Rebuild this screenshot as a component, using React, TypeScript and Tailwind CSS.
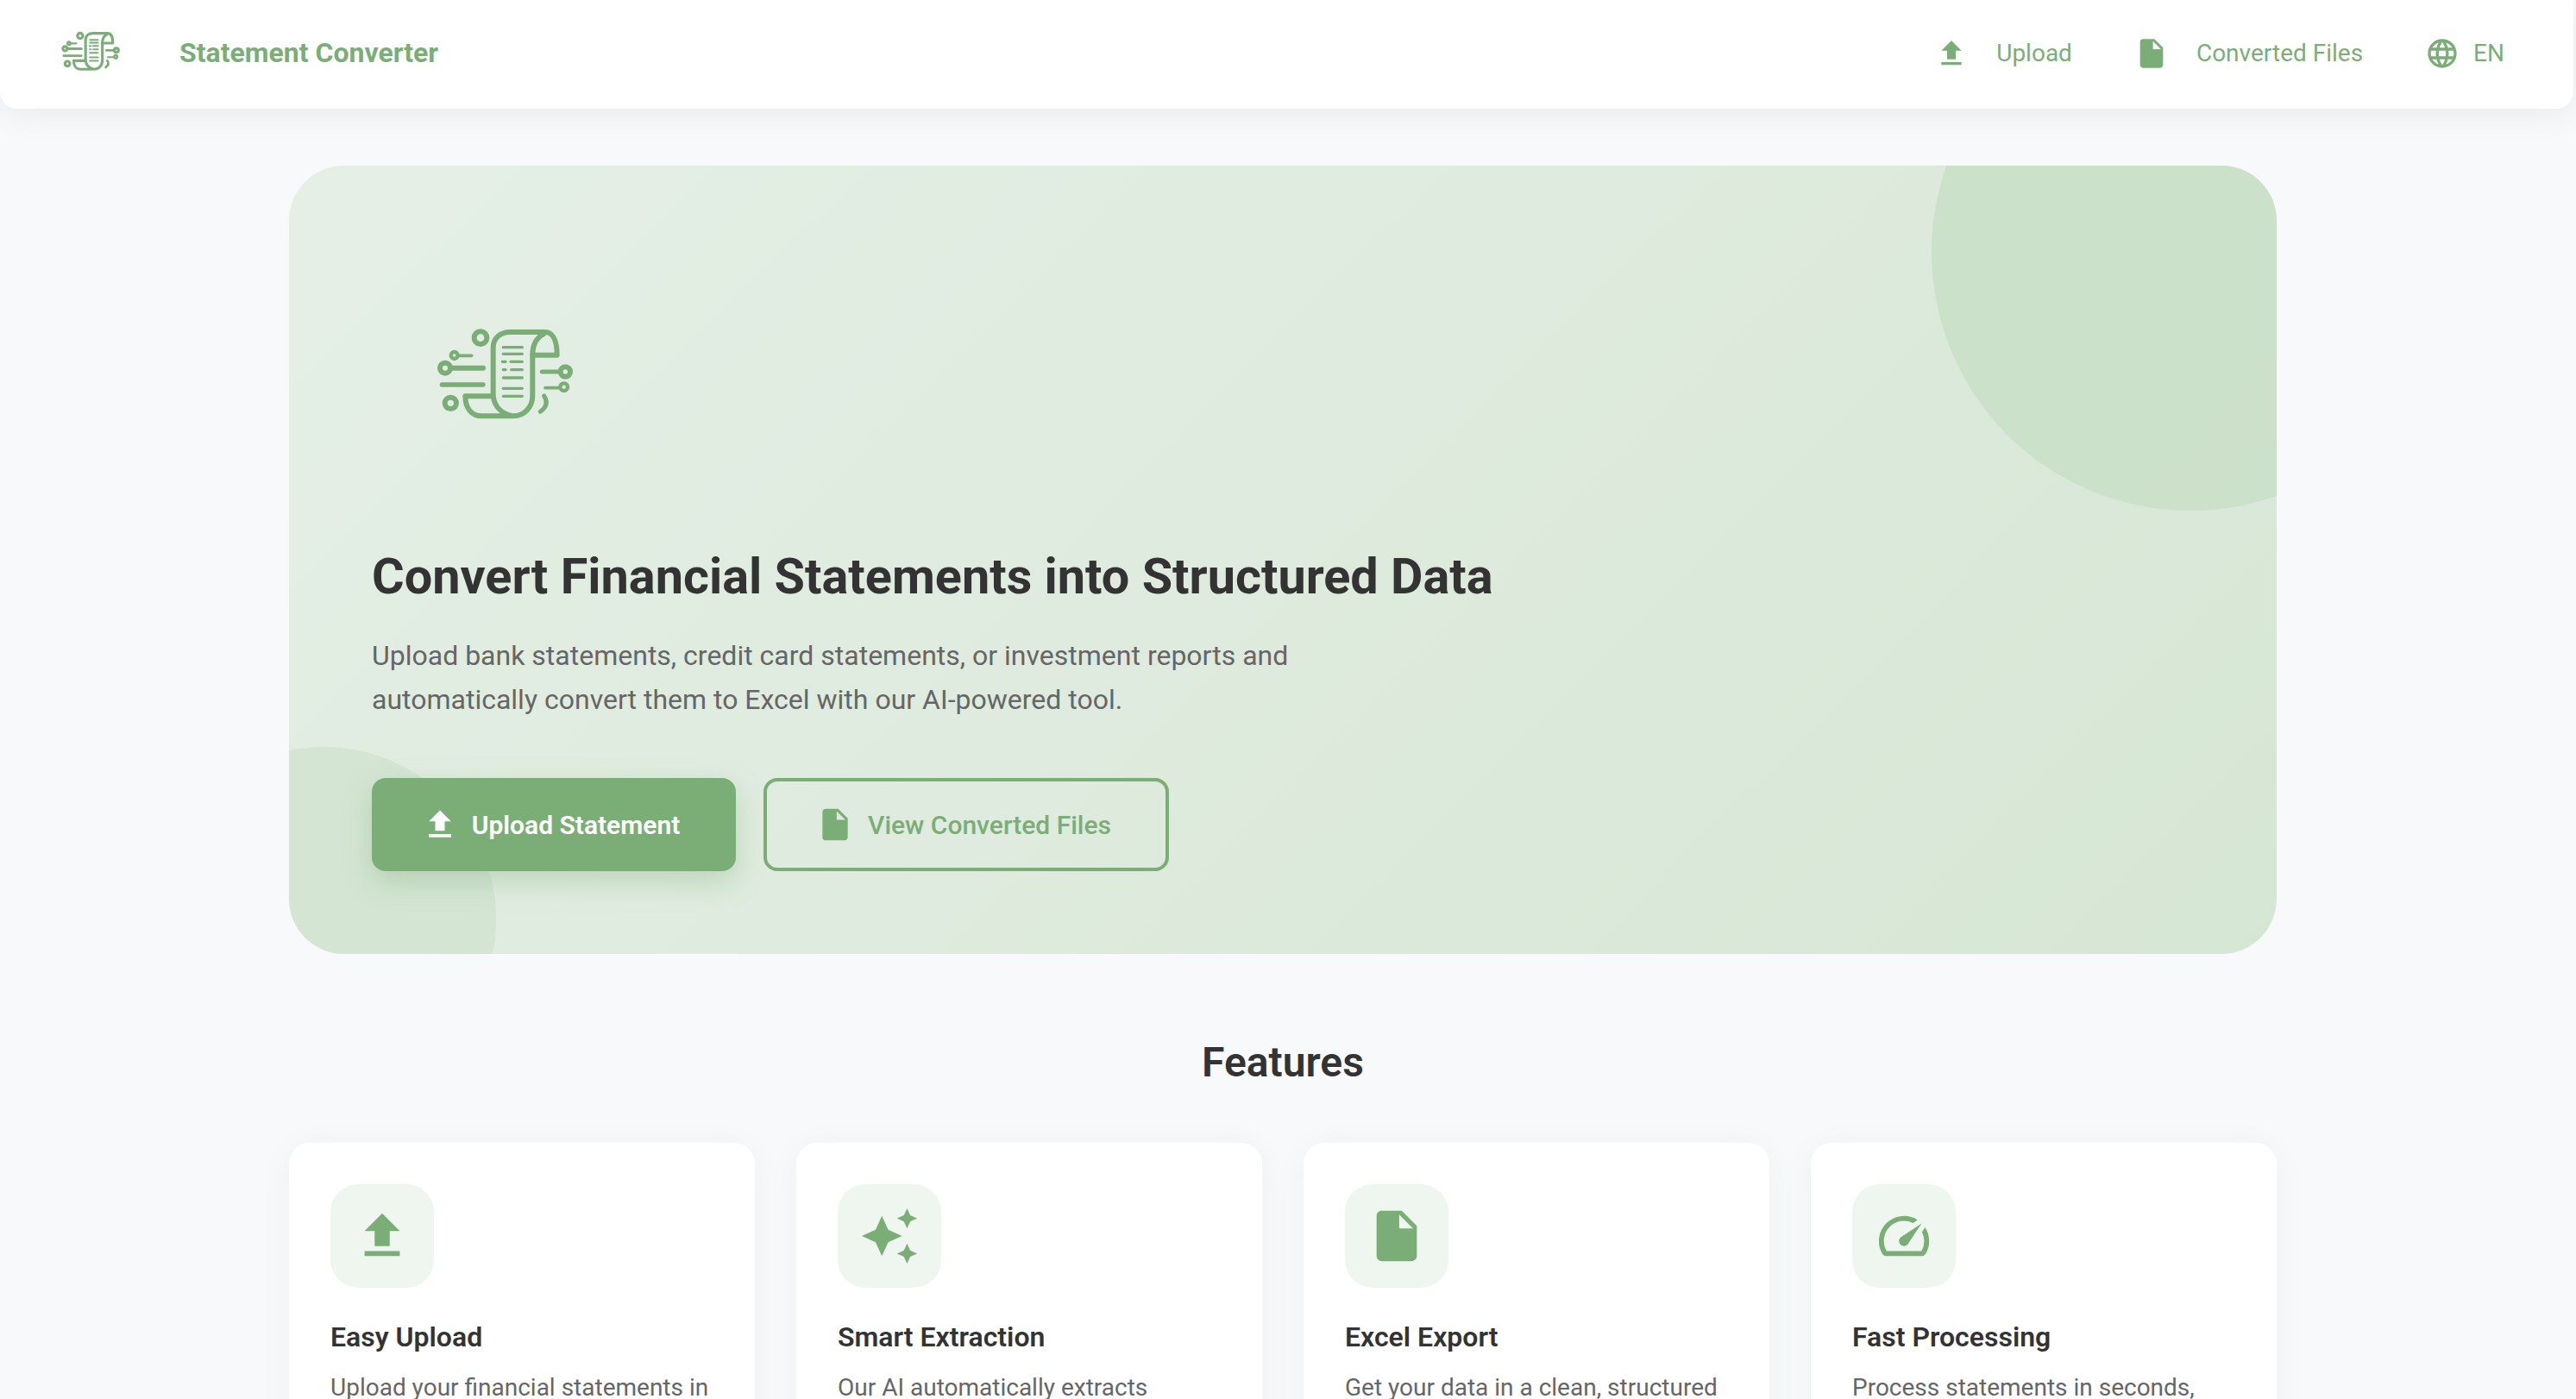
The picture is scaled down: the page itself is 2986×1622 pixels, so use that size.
import type { ReactNode } from "react";

const GREEN = "#7bae76";

const ICONS = {
  upload: "M9 16h6v-6h4l-7-7-7 7h4zm-4 2h14v2H5z",
  file: "M6 2c-1.1 0-1.99.9-1.99 2L4 20c0 1.1.89 2 1.99 2H18c1.1 0 2-.9 2-2V8l-6-6H6zm7 7V3.5L18.5 9H13z",
  globe:
    "M11.99 2C6.47 2 2 6.48 2 12s4.47 10 9.99 10C17.52 22 22 17.52 22 12S17.52 2 11.99 2zm6.93 6h-2.95c-.32-1.25-.78-2.45-1.38-3.56 1.84.63 3.37 1.91 4.33 3.56zM12 4.04c.83 1.2 1.48 2.53 1.91 3.96h-3.82c.43-1.43 1.08-2.76 1.91-3.96zM4.26 14C4.1 13.36 4 12.69 4 12s.1-1.36.26-2h3.38c-.08.66-.14 1.32-.14 2 0 .68.06 1.34.14 2H4.26zm.82 2h2.95c.32 1.25.78 2.45 1.38 3.56-1.84-.63-3.37-1.9-4.33-3.56zm2.95-8H5.08c.96-1.66 2.49-2.93 4.33-3.56C8.81 5.55 8.35 6.75 8.03 8zM12 19.96c-.83-1.2-1.48-2.53-1.91-3.96h3.82c-.43 1.43-1.08 2.76-1.91 3.96zM14.34 14H9.66c-.09-.66-.16-1.32-.16-2 0-.68.07-1.35.16-2h4.68c.09.65.16 1.32.16 2 0 .68-.07 1.34-.16 2zm.25 5.56c.6-1.11 1.06-2.31 1.38-3.56h2.95c-.96 1.65-2.49 2.93-4.33 3.56zM16.36 14c.08-.66.14-1.32.14-2 0-.68-.06-1.34-.14-2h3.38c.16.64.26 1.31.26 2s-.1 1.36-.26 2h-3.38z",
  sparkle:
    "M19 9l1.25-2.75L23 5l-2.75-1.25L19 1l-1.25 2.75L15 5l2.75 1.25L19 9zm-7.5.5L9 4 6.5 9.5 1 12l5.5 2.5L9 20l2.5-5.5L17 12l-5.5-2.5zM19 15l-1.25 2.75L15 19l2.75 1.25L19 23l1.25-2.75L23 19l-2.75-1.25L19 15z",
  speed:
    "M20.38 8.57l-1.23 1.85a8 8 0 0 1-.22 7.58H5.07A8 8 0 0 1 15.58 6.85l1.85-1.23A10 10 0 0 0 3.35 19a2 2 0 0 0 1.72 1h13.85a2 2 0 0 0 1.74-1 10 10 0 0 0-.27-10.44zm-9.79 6.84a2 2 0 0 0 2.83 0l5.66-8.49-8.49 5.66a2 2 0 0 0 0 2.83z",
};

function Icon({ d, className }: { d: string; className: string }) {
  return (
    <svg viewBox="0 0 24 24" fill="currentColor" className={className}>
      <path d={d} />
    </svg>
  );
}

// same drawing in the header and the hero, heavy lets the small one keep its weight
function Logo({ className, heavy = 0 }: { className: string; heavy?: number }) {
  return (
    <svg viewBox="0 0 660 450" fill="none" stroke={GREEN} strokeWidth={16 + heavy} strokeLinecap="round" strokeLinejoin="round" className={className}>
      <circle cx="231" cy="95" r="22" />
      <circle cx="140" cy="156" r="12" strokeWidth={11 + heavy} />
      <path d="M152 157H200" strokeWidth={9 + heavy} />
      <circle cx="108" cy="200" r="18" />
      <path d="M126 200H240" />
      <path d="M97 258H240" strokeWidth={14 + heavy} />
      <circle cx="127" cy="322" r="20" />
      <path d="M275 296V130C275 95 300 75 335 75H455C480 75 497 100 497 155H412C412 120 425 95 450 82" />
      <path d="M412 155V295C412 335 385 367 345 367H235C200 367 178 340 178 298H275C280 335 305 360 345 367" />
      <g strokeWidth={8 + heavy}>
        <path d="M310 128H376" />
        <path d="M310 151H376" />
        <path d="M307 178H318M336 178H376" />
        <path d="M310 206H318M338 206H376" />
        <path d="M310 234H376" />
        <path d="M310 271H376" />
        <path d="M310 298H376" />
      </g>
      <circle cx="526" cy="213" r="17" />
      <path d="M445 213H508" strokeWidth={13 + heavy} />
      <circle cx="521" cy="266" r="13" strokeWidth={11 + heavy} />
      <path d="M456 269H507" strokeWidth={9 + heavy} />
      <path d="M452 297C468 320 458 338 439 352" strokeWidth={13 + heavy} />
    </svg>
  );
}

function NavItem({ d, children, gap }: { d: string; children: ReactNode; gap: string }) {
  return (
    <div className={`-mt-[2px] flex items-center text-[28px] text-[#7bae76] ${gap}`}>
      <Icon d={d} className="h-[40px] w-[40px]" />
      <span>{children}</span>
    </div>
  );
}

const FEATURES = [
  {
    icon: ICONS.upload,
    title: "Easy Upload",
    text: "Upload your financial statements in PDF format with a simple drag and drop.",
  },
  {
    icon: ICONS.sparkle,
    title: "Smart Extraction",
    text: "Our AI automatically extracts transactions and key details from your documents.",
  },
  {
    icon: ICONS.file,
    title: "Excel Export",
    text: "Get your data in a clean, structured Excel file ready for analysis.",
  },
  {
    icon: ICONS.speed,
    title: "Fast Processing",
    text: "Process statements in seconds, saving hours of manual data entry.",
  },
];

export default function App() {
  return (
    <div className="h-[1622px] overflow-hidden bg-[#f8f9fb] font-['Roboto',sans-serif]">
      <header className="mr-[3px] flex h-[126px] items-center justify-between rounded-b-[20px] bg-white pl-[60px] pr-[80px] shadow-[0_4px_40px_rgba(0,0,0,0.07)]">
        <div className="flex items-center gap-[54px]">
          <Logo className="-mt-[6px] h-[64px] w-[94px]" heavy={6} />
          <span className="-mt-[4px] text-[32px] font-bold text-[#7bae76]">Statement Converter</span>
        </div>
        <div className="flex items-center gap-[72px]">
          <NavItem d={ICONS.upload} gap="gap-[32px]">
            Upload
          </NavItem>
          <NavItem d={ICONS.file} gap="gap-[32px]">
            Converted Files
          </NavItem>
          <NavItem d={ICONS.globe} gap="gap-[16px]">
            EN
          </NavItem>
        </div>
      </header>

      <main className="mx-auto w-[2304px] -translate-x-[6px] pt-[66px]">
        <section className="relative overflow-hidden rounded-[64px] bg-[linear-gradient(135deg,#e5efe6,#d6e6d4)] p-[96px]">
          <div className="absolute -right-[200px] -top-[200px] h-[600px] w-[600px] rounded-full bg-[#c8dec6]/80" />
          <div className="absolute -bottom-[160px] -left-[160px] h-[400px] w-[400px] rounded-full bg-[#c8dec6]/50" />
          <div className="relative">
            <Logo className="ml-[49px] mt-[72px] mb-[123px] h-[150px] w-[220px]" heavy={2} />
            <h1 className="text-[57.6px] font-bold leading-[72px] text-[#333333]">
              Convert Financial Statements into Structured Data
            </h1>
            <p className="mt-[30px] w-[1200px] text-[32px] leading-[51px] text-[#666666]">
              Upload bank statements, credit card statements, or investment reports and automatically convert them to Excel with our AI-powered tool.
            </p>
            <div className="mt-[65px] flex gap-[32px]">
              <button className="flex h-[108px] w-[422px] items-center justify-center gap-[15px] rounded-[16px] bg-[#7bae76] pr-[8px] text-[30px] font-semibold text-white shadow-[0_12px_32px_rgba(123,174,118,0.35)]">
                <Icon d={ICONS.upload} className="h-[44px] w-[44px]" />
                Upload Statement
              </button>
              <button className="flex h-[108px] w-[470px] items-center justify-center gap-[16px] rounded-[16px] border-4 border-[#7bae76] pr-[6px] text-[30px] font-medium text-[#7bae76]">
                <Icon d={ICONS.file} className="h-[44px] w-[44px]" />
                View Converted Files
              </button>
            </div>
          </div>
        </section>

        <h2 className="mt-[96px] text-center text-[48px] font-semibold leading-[60px] text-[#333333]">Features</h2>

        <div className="mt-[63px] grid grid-cols-4 gap-[48px]">
          {FEATURES.map((f) => (
            <div key={f.title} className="rounded-[24px] bg-white p-[48px] shadow-[0_4px_40px_rgba(0,0,0,0.04)]">
              <div className="flex h-[120px] w-[120px] items-center justify-center rounded-[32px] bg-[#eff6f0] text-[#7bae76]">
                <Icon d={f.icon} className="h-[70px] w-[70px]" />
              </div>
              <h3 className="mt-[35px] text-[32px] font-semibold leading-[44px] text-[#333333]">{f.title}</h3>
              <p className="mt-[15px] text-[28px] leading-[44px] text-[#666666]">{f.text}</p>
            </div>
          ))}
        </div>
      </main>
    </div>
  );
}
